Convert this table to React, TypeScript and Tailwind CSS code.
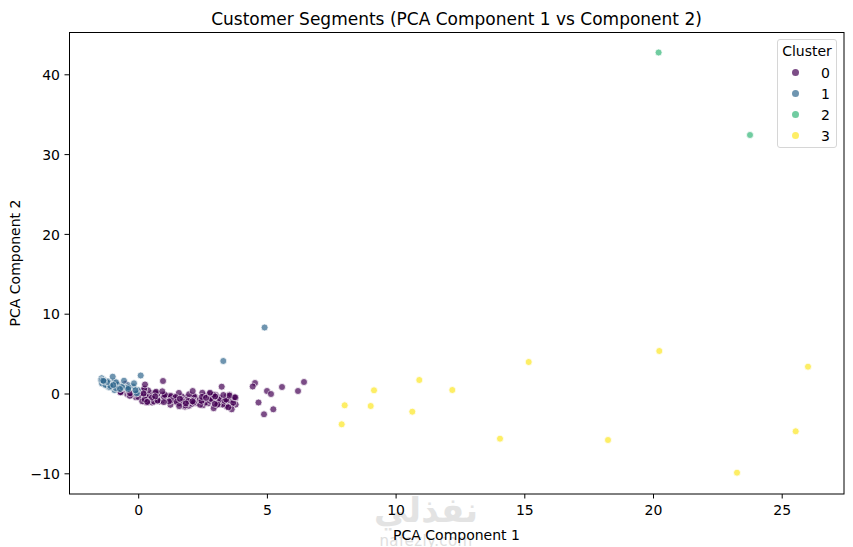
import React from "react";

type Pt = [number, number];

// viridis, 4 clusters
const COLORS = ["#440154", "#31688e", "#35b779", "#fde725"];

// data -> page pixels
const X = (v: number) => 138.7 + 25.74 * v;
const Y = (v: number) => 394 - 7.98 * v;

function rng(seed: number) {
  return () => {
    seed = (seed + 0x6d2b79f5) | 0;
    let t = Math.imul(seed ^ (seed >>> 15), 1 | seed);
    t = (t + Math.imul(t ^ (t >>> 7), 61 | t)) ^ t;
    return ((t ^ (t >>> 14)) >>> 0) / 4294967296;
  };
}

const centerLine: Pt[] = [
  [100, 381],
  [115, 386],
  [130, 392],
  [145, 396],
  [160, 398],
  [190, 400],
  [220, 401],
  [236, 402],
];

function centerAt(x: number) {
  for (let i = 1; i < centerLine.length; i++) {
    const [x0, y0] = centerLine[i - 1];
    const [x1, y1] = centerLine[i];
    if (x <= x1) return y0 + ((x - x0) / (x1 - x0)) * (y1 - y0);
  }
  return centerLine[centerLine.length - 1][1];
}

// dense band near the origin
const bandPurple: Pt[] = [];
const bandBlue: Pt[] = [];
const r = rng(11);
for (let i = 0; i < 260; i++) {
  const x = 101 + 135 * r();
  const c = centerAt(x);
  const half = x < 130 ? 3 + ((x - 100) / 30) * 3.5 : 7.5;
  const y = c + (r() + r() - 1) * half * 1.1;
  if (x < 116 || (x < 138 && y < c && r() < 0.75)) bandBlue.push([x, y]);
  else bandPurple.push([x, y]);
}

const purple: Pt[] = [
  [163, 381], [145, 384.5], [255, 383], [252.7, 386.5], [267, 391], [271, 394],
  [282, 387], [304, 382], [298, 391], [258.5, 402.5], [273.3, 409.3], [264, 414.3],
  [231.7, 409.3], [228.3, 407.3], [221.7, 386.7], [192.7, 391], [210, 392.7],
];

const blue: Pt[] = [
  [264.6, 327.5], [223.3, 361], [140.7, 375.5], [112.7, 376.7], [104, 381.5],
  [124, 380.7], [134, 383.3], [113.3, 385], [120, 389], [103.3, 380.7],
];

const green: Pt[] = [
  [658.6, 52.5],
  [750, 135],
];

const yellow: Pt[] = [
  [344.7, 405.3], [341.7, 424.3], [374, 390.3], [370.7, 406], [419.3, 380],
  [412.3, 411.7], [452.3, 390], [528.7, 362], [500, 438.7], [659.3, 351],
  [608, 440], [808, 366.7], [795.7, 431.3], [737, 472.7],
];

const xTicks = [0, 5, 10, 15, 20, 25];
const yTicks = [-10, 0, 10, 20, 30, 40];

function Dots({ pts, color }: { pts: Pt[]; color: string }) {
  return (
    <>
      {pts.map(([x, y], i) => (
        <circle
          key={i}
          cx={x}
          cy={y}
          r={3.5}
          fill={color}
          stroke="#ffffff"
          strokeWidth={0.8}
          opacity={0.7}
        />
      ))}
    </>
  );
}

function Legend() {
  const swatch = ["bg-[#440154]/70", "bg-[#31688e]/70", "bg-[#35b779]/70", "bg-[#fde725]/70"];
  return (
    <div className="absolute left-[747px] top-[7px] w-[60px] h-[109px] border border-[#d6d6d6] rounded-[3px] bg-white/80 flex flex-col pt-[3px]">
      <div className="text-center leading-[16px] text-[14px] text-black">Cluster</div>
      <div className="mt-[3px] flex flex-col">
        {swatch.map((cls, i) => (
          <div key={i} className="h-[21px] flex items-center justify-between pl-[14px] pr-[6px]">
            <span className={`w-[7px] h-[7px] rounded-full ${cls}`} />
            <span className="text-[14px] leading-[16px] text-black">{i}</span>
          </div>
        ))}
      </div>
    </div>
  );
}

export default function App() {
  return (
    <div className="relative isolate w-[853px] h-[547px] bg-white flex flex-col font-['DejaVu_Sans',sans-serif] text-black overflow-hidden">
      {/* watermark */}
      <div className="absolute -z-10 left-[366px] top-[490px] w-[120px] flex flex-col items-center text-[#e3e3e3]">
        <span className="text-[34px] font-black leading-[40px]" dir="rtl">نفذلي</span>
        <span className="text-[15px] leading-[16px] mt-[3px] tracking-[0.4px] text-[#dedede]">nafezly.com</span>
      </div>

      <div className="h-[32px] pl-[69px] pr-[9px] pt-[9px] flex justify-center">
        <span className="text-[17px] leading-[20px] whitespace-nowrap">
          Customer Segments (PCA Component 1 vs Component 2)
        </span>
      </div>

      <div className="flex h-[486px]">
        <div className="w-[30px] h-[462px] flex items-center justify-center">
          <span className="-rotate-90 whitespace-nowrap text-[14px] leading-[16px]">PCA Component 2</span>
        </div>
        <div className="relative w-[823px]">
          <svg width={823} height={486} viewBox="30 32 823 486" className="block">
            <Dots pts={bandPurple} color={COLORS[0]} />
            <Dots pts={purple} color={COLORS[0]} />
            <Dots pts={bandBlue} color={COLORS[1]} />
            <Dots pts={blue} color={COLORS[1]} />
            <Dots pts={green} color={COLORS[2]} />
            <Dots pts={yellow} color={COLORS[3]} />

            <rect x={69.5} y={32.5} width={774.5} height={461.5} fill="none" stroke="#000" strokeWidth={1} />

            {xTicks.map((t) => (
              <g key={t}>
                <line x1={X(t)} x2={X(t)} y1={494} y2={498.5} stroke="#000" strokeWidth={1} />
                <text x={X(t)} y={515} textAnchor="middle" fontSize={14} fill="#000">
                  {t}
                </text>
              </g>
            ))}
            {yTicks.map((t) => (
              <g key={t}>
                <line x1={64.5} x2={69.5} y1={Y(t)} y2={Y(t)} stroke="#000" strokeWidth={1} />
                <text x={60} y={Y(t) + 5.1} textAnchor="end" fontSize={14} fill="#000">
                  {t < 0 ? `\u2212${-t}` : t}
                </text>
              </g>
            ))}
          </svg>
          <Legend />
        </div>
      </div>

      <div className="pl-[69px] pr-[9px] pt-[9px] flex justify-center">
        <span className="text-[14px] leading-[16px] whitespace-nowrap">PCA Component 1</span>
      </div>
    </div>
  );
}
